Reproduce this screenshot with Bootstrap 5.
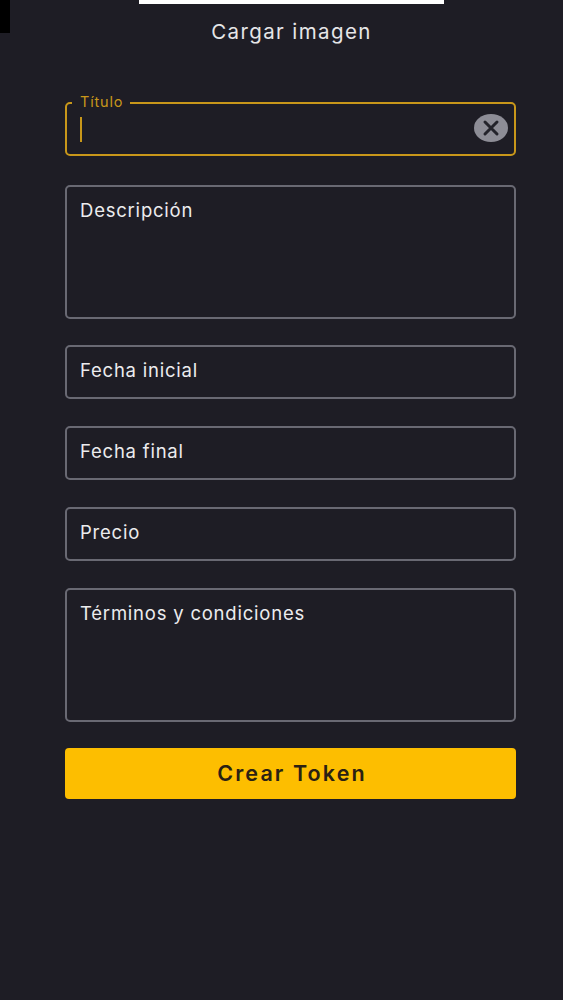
<!DOCTYPE html>
<html lang="es">
<head>
<meta charset="utf-8">
<title>Crear Token</title>
<link rel="stylesheet" href="https://cdn.jsdelivr.net/npm/bootstrap@5.3.0/dist/css/bootstrap.min.css">
<style>
html, body { height: 100%; }
body { background: #1e1d25; font-family: "Inter", "Noto Sans", sans-serif; color: #ececec; overflow: hidden; }
.screen { position: relative; min-height: 1000px; }
.corner-mark { position: absolute; left: 0; top: 0; width: 10px; height: 33px; background: #000; }
.image-strip { width: 305px; height: 4px; margin-left: 139px; background: #fff; }
.upload-text { margin: 16px 0 0 20px; height: 24px; line-height: 24px; font-size: 20.5px; letter-spacing: 1.4px; text-align: center; color: #e6e6e8; }
.token-form { margin: 58px 47px 0 65px; }
.field-wrap { position: relative; margin-bottom: 27px; }
.field-wrap.w-first { margin-bottom: 29px; }
.field-wrap.w-desc { margin-bottom: 26px; }
.field-wrap.w-terms { margin-bottom: 26px; }
.token-form .form-control { height: 54px; padding: 0 14px; background: transparent; border: 2px solid #696973; border-radius: 5px; box-shadow: none; resize: none; color: #eee; }
.token-form textarea.form-control { height: 134px; }
.field-label { position: absolute; left: 15px; top: 13px; margin: 0; font-size: 18.5px; line-height: 24px; letter-spacing: .78px; color: #ececee; }
.token-form .form-control.active-field { border-color: #c8971a; }
.float-label { position: absolute; left: 7px; top: -9px; padding: 0 7px 0 8px; background: #1e1d25; font-size: 14.5px; line-height: 17px; letter-spacing: .8px; color: #c8971a; }
.text-caret { position: absolute; left: 15px; top: 15px; width: 2px; height: 25px; background: #c8971a; }
.clear-btn { position: absolute; right: 8px; top: 12px; width: 34px; height: 28px; padding: 0; border: 0; border-radius: 50%; background: #8d8d96; display: flex; align-items: center; justify-content: center; }
.clear-btn svg { width: 20px; height: 20px; }
.submit-token { display: block; width: 100%; height: 51px; padding: 0 0 0 3px; border: 0; border-radius: 4px; background: #fdbe00; color: #2a2113; font-size: 21.5px; font-weight: 600; letter-spacing: 2.1px; }
.submit-token:hover { background: #fdbe00; color: #2a2113; }
</style>
</head>
<body>
<div class="screen">
  <div class="corner-mark"></div>
  <div class="image-strip"></div>
  <p class="upload-text">Cargar imagen</p>
  <form class="token-form">
    <div class="field-wrap w-first">
      <input class="form-control active-field" id="titulo" type="text" aria-label="Título">
      <label class="float-label" for="titulo">Título</label>
      <span class="text-caret"></span>
      <button class="clear-btn" type="button" aria-label="Borrar">
        <svg viewBox="0 0 20 20"><path d="M4 4 L16 16 M16 4 L4 16" stroke="#23232b" stroke-width="3" stroke-linecap="round" fill="none"/></svg>
      </button>
    </div>
    <div class="field-wrap w-desc">
      <textarea class="form-control" id="descripcion"></textarea>
      <label class="field-label" for="descripcion">Descripción</label>
    </div>
    <div class="field-wrap">
      <input class="form-control" id="inicial" type="text">
      <label class="field-label" for="inicial">Fecha inicial</label>
    </div>
    <div class="field-wrap">
      <input class="form-control" id="final" type="text">
      <label class="field-label" for="final">Fecha final</label>
    </div>
    <div class="field-wrap">
      <input class="form-control" id="precio" type="text">
      <label class="field-label" for="precio">Precio</label>
    </div>
    <div class="field-wrap w-terms">
      <textarea class="form-control" id="terminos"></textarea>
      <label class="field-label" for="terminos">Términos y condiciones</label>
    </div>
    <button class="btn submit-token" type="button">Crear Token</button>
  </form>
</div>
<script src="https://cdn.jsdelivr.net/npm/bootstrap@5.3.0/dist/js/bootstrap.bundle.min.js"></script>
</body>
</html>
